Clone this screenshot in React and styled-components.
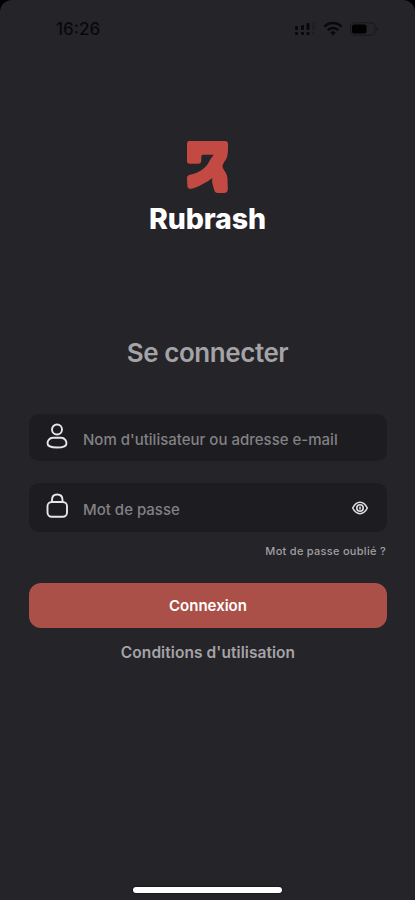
import React from "react";
import styled, { createGlobalStyle } from "styled-components";

const GlobalStyle = createGlobalStyle`
  * {
    box-sizing: border-box;
  }
  body {
    margin: 0;
    background: #000;
    font-family: Inter, "Liberation Sans", sans-serif;
  }
`;

const Screen = styled.main`
  display: flex;
  flex-direction: column;
  height: 900px;
  overflow: hidden;
  background: #252429;
  border-radius: 12px 12px 0 0;
`;

const StatusBar = styled.header`
  display: flex;
  justify-content: space-between;
  align-items: center;
  height: 58px;
  padding: 0 36px 0 56px;
  color: #09090b;
`;

const Clock = styled.span`
  font-size: 17px;
  font-weight: 500;
`;

const StatusIcons = styled.div`
  display: flex;
  align-items: center;
  gap: 6px;
`;

const Brand = styled.div`
  display: flex;
  flex-direction: column;
  align-items: center;
  margin-top: 82px;
`;

const BrandName = styled.span`
  margin-top: 8px;
  color: #fff;
  font-size: 28.5px;
  font-weight: 800;
  line-height: 34px;
  letter-spacing: -0.1px;
`;

const Title = styled.h1`
  margin: 99px 0 0;
  color: #a4a3a6;
  font-size: 26px;
  font-weight: 600;
  line-height: 36px;
  letter-spacing: -0.45px;
  text-align: center;
`;

const Form = styled.form`
  display: flex;
  flex-direction: column;
  margin: 43px 28px 0 29px;
`;

const Field = styled.label`
  display: flex;
  align-items: center;
  height: ${({ $height }) => $height}px;
  margin-bottom: ${({ $gap }) => $gap}px;
  padding: 0 18px 0 17px;
  background: #1d1c20;
  border-radius: 10px;
`;

const FieldIcon = styled.svg`
  width: 24px;
  height: 28px;
  margin-bottom: 4px;
  fill: none;
  stroke: #e6e6e7;
  stroke-width: 1.9px;
`;

const Input = styled.input`
  flex: 1;
  min-width: 0;
  height: 24px;
  margin: 4px 0 0 13px;
  padding: 0;
  border: 0;
  outline: 0;
  background: transparent;
  color: #fff;
  font-family: inherit;
  font-size: 15px;
  font-weight: 500;
  &::placeholder {
    color: #828185;
    opacity: 1;
  }
`;

const ForgotLink = styled.a`
  align-self: flex-end;
  margin-right: 1px;
  color: #a09fa2;
  font-size: 11px;
  font-weight: 500;
  line-height: 14px;
  letter-spacing: 0.28px;
`;

const SubmitButton = styled.button`
  height: 45px;
  margin-top: 25px;
  padding: 0;
  border: 0;
  border-radius: 12px;
  background: #ab5048;
  color: #fff;
  font-family: inherit;
  font-size: 15px;
  font-weight: 600;
`;

const TermsLink = styled.a`
  margin-top: 14px;
  color: #a4a3a6;
  font-size: 15.5px;
  font-weight: 600;
  line-height: 22px;
  letter-spacing: 0.07px;
  text-align: center;
`;

const HomeIndicator = styled.div`
  width: 149px;
  height: 6px;
  margin: auto auto 7px 133px;
  border-radius: 3px;
  background: #fff;
  box-shadow: 0 0 2px #000;
`;

const SignalIcon = () => (
  <svg width="23" height="16" viewBox="0 0 23 16" fill="currentColor">
    <rect x="1" y="5" width="3" height="4" rx="1" />
    <rect x="7" y="4" width="3" height="5" rx="1" />
    <rect x="12.5" y="2" width="3" height="7" rx="1" />
    <rect x="18" y="1" width="3" height="8" rx="1" opacity="0.2" />
    <rect x="1" y="11" width="3" height="3" rx="1" />
    <rect x="7" y="11" width="3" height="3" rx="1" />
    <rect x="12.5" y="11" width="3" height="3" rx="1" />
    <rect x="18" y="11" width="3" height="3" rx="1" opacity="0.2" />
  </svg>
);

const WifiIcon = () => (
  <svg width="20" height="16" viewBox="0 0 20 16" fill="none" stroke="currentColor" strokeWidth="2.5">
    <path d="M1.5 5.7C6 .8 14 .8 18.5 5.7" />
    <path d="M4.8 9.2C7.6 6.1 12.4 6.1 15.2 9.2" />
    <path d="M7.2 11.5Q10 9 12.8 11.5L10 14.5Z" fill="currentColor" stroke="none" />
  </svg>
);

const BatteryIcon = () => (
  <svg width="30" height="16" viewBox="0 0 30 16" fill="none">
    <rect x="1.5" y="1.7" width="24.5" height="12.6" rx="4" stroke="#1a191d" />
    <rect x="3" y="3.5" width="14.5" height="9" rx="2" fill="#010101" />
    <path d="M27.5 6V10Q29 9.5 29 8T27.5 6" fill="#161519" />
  </svg>
);

const LogoMark = () => (
  <svg width="43" height="54" viewBox="0 0 43 54" fill="#c34a42">
    <path d="M3 1H39Q42 1 42 4C42 11 42 15 40.5 18.5C39 21.5 36.5 23.5 36.5 26.5C37 30 41.5 33 41.5 39L41.8 49Q41.8 53 38 53H32Q28.8 53 28.2 50L26.5 44Q25.6 40.5 26.5 38C20 42.5 12 47.5 5 48.8Q2 49.3 1.4 46.5L1 38.5Q.9 35.5 4 34.8C13 33 18.5 28.5 21.5 24.5C23.5 21.5 24 19 26.8 16L27.8 14.8H17Q15.3 14.8 15.3 17V20.5Q15.3 23.8 12 23.8H3.5Q1 23.8 1 21V4Q1 1 3 1Z" />
  </svg>
);

const UserIcon = () => (
  <FieldIcon viewBox="0 0 24 28">
    <circle cx="11" cy="7.5" r="5" />
    <path d="M6.7 15.7H15.3C18.5 15.7 20.5 19 20.5 21.2C20.5 24 17 25.5 11 25.5S1.5 24 1.5 21.2C1.5 19 3.5 15.7 6.7 15.7Z" />
  </FieldIcon>
);

const LockIcon = () => (
  <FieldIcon viewBox="0 0 24 28">
    <rect x="1.5" y="10" width="19.5" height="14.7" rx="4.2" />
    <path d="M6 10V8C6 4.5 8 2.5 11.2 2.5S16.5 4.5 16.5 8V10" />
  </FieldIcon>
);

const EyeIcon = () => (
  <svg width="18" height="16" viewBox="0 0 18 16" fill="none" stroke="#dededf" strokeWidth="1.6">
    <path d="M1.7 8C3.7 4 6 2.3 9 2.3S14.3 4 16.3 8C14.3 12 12 13.7 9 13.7S3.7 12 1.7 8Z" />
    <circle cx="9" cy="8" r="3.2" />
    <path d="M9 6.5V9.5" />
  </svg>
);

const App = () => {
  return (
    <>
      <GlobalStyle />
      <Screen>
        <StatusBar>
          <Clock>16:26</Clock>
          <StatusIcons>
            <SignalIcon />
            <WifiIcon />
            <BatteryIcon />
          </StatusIcons>
        </StatusBar>
        <Brand>
          <LogoMark />
          <BrandName>Rubrash</BrandName>
        </Brand>
        <Title>Se connecter</Title>
        <Form onSubmit={(e) => e.preventDefault()}>
          <Field $height={47} $gap={22}>
            <UserIcon />
            <Input type="text" placeholder="Nom d'utilisateur ou adresse e-mail" />
          </Field>
          <Field $height={49} $gap={12}>
            <LockIcon />
            <Input type="password" placeholder="Mot de passe" />
            <EyeIcon />
          </Field>
          <ForgotLink>Mot de passe oublié ?</ForgotLink>
          <SubmitButton>Connexion</SubmitButton>
          <TermsLink>Conditions d'utilisation</TermsLink>
        </Form>
        <HomeIndicator />
      </Screen>
    </>
  );
};

export default App;
